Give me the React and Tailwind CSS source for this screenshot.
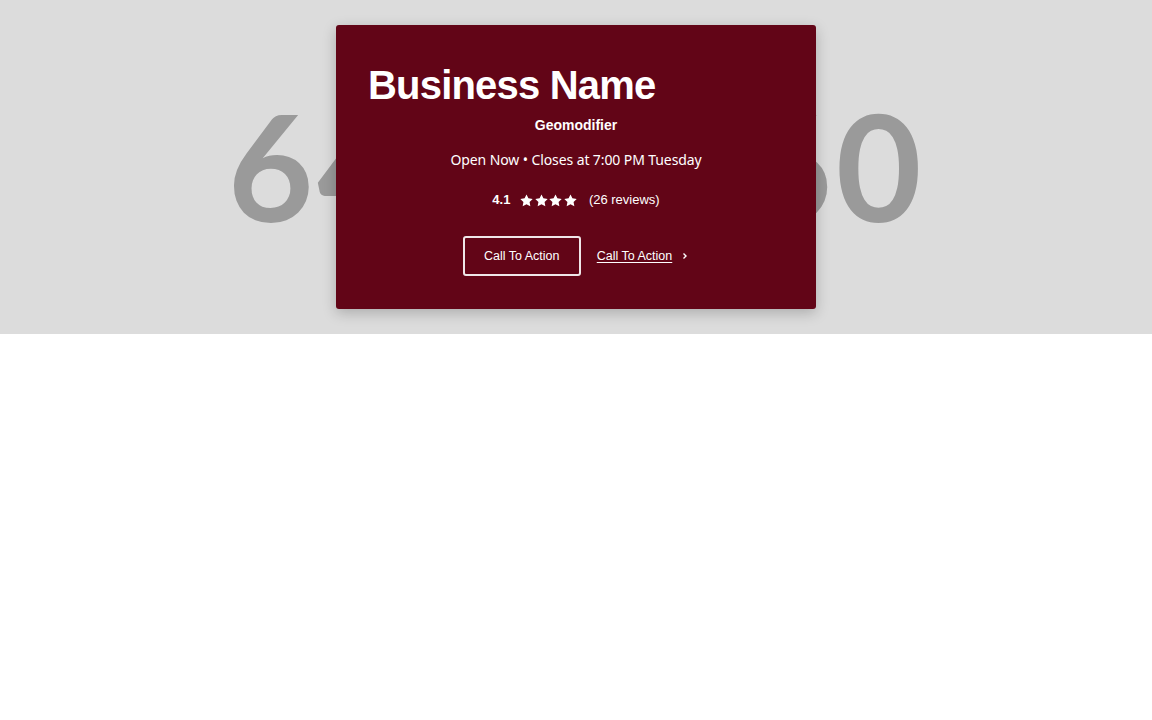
import React from "react";

function Star() {
  return (
    <svg width="13" height="13" viewBox="1 1 22 21.5" fill="white" aria-hidden="true">
      <path d="M12 1.5l3.2 6.6 7.3 1-5.3 5.1 1.3 7.3L12 18l-6.5 3.5 1.3-7.3L1.5 9.1l7.3-1z" />
    </svg>
  );
}

export default function App() {
  return (
    <div className="w-[1152px] h-[720px] bg-white">
      <div className="relative h-[334px] bg-[#dcdcdc] flex items-center justify-center overflow-hidden">
        <span
          className="text-[#9a9a9a] text-[148px] font-bold leading-none whitespace-nowrap tracking-[0.025em] mb-[4px] pl-[1px]"
          style={{ fontFamily: "Lato, 'Open Sans', sans-serif" }}
        >
          640 x 360
        </span>
        <div className="absolute top-[25px] left-[336px] w-[480px] bg-[#620517] rounded-[3px] shadow-[0_4px_14px_rgba(0,0,0,0.22)] px-8 pt-[36px] pb-[33px] text-white">
          <h1
            className="text-[40px] font-bold leading-[48px] tracking-[-0.8px]"
            style={{ fontFamily: "'Liberation Sans', Arial, sans-serif" }}
          >
            Business Name
          </h1>
          <div
            className="mt-[6px] text-center text-[14px] font-bold leading-[20px]"
            style={{ fontFamily: "'Liberation Sans', Arial, sans-serif" }}
          >
            Geomodifier
          </div>
          <div
            className="mt-[15px] text-center text-[14px] leading-[20px] tracking-[-0.1px]"
            style={{ fontFamily: "'Noto Sans', sans-serif" }}
          >
            Open Now • Closes at 7:00 PM Tuesday
          </div>
          <div
            className="mt-[20px] flex items-center justify-center h-[20px] text-[13px]"
            style={{ fontFamily: "'Liberation Sans', Arial, sans-serif" }}
          >
            <span className="font-bold">4.1</span>
            <span className="ml-[10px] flex items-center gap-[1.5px]">
              <Star />
              <Star />
              <Star />
              <Star />
            </span>
            <span className="ml-[12px]">(26 reviews)</span>
          </div>
          <div
            className="mt-[26px] flex items-center justify-center gap-4 text-[12.5px]"
            style={{ fontFamily: "'Liberation Sans', Arial, sans-serif" }}
          >
            <div className="h-[40px] w-[118px] border-2 border-[#efe6e8] rounded-[3px] flex items-center justify-center">
              Call To Action
            </div>
            <div className="flex items-center gap-[9px]">
              <span className="underline underline-offset-[2px]">Call To Action</span>
              <svg width="8" height="8" viewBox="0 0 8 8" aria-hidden="true">
                <path d="M2.5 1.5L5 4 2.5 6.5" stroke="white" strokeWidth="1.4" fill="none" />
              </svg>
            </div>
          </div>
        </div>
      </div>
    </div>
  );
}
